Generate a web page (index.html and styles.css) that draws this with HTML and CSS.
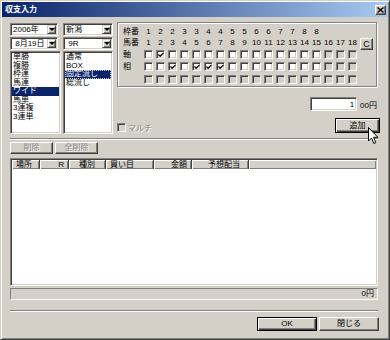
FILE: index.html
```html
<!DOCTYPE html>
<html lang="ja">
<head>
    <meta charset="UTF-8">
    <title>収支入力</title>
    <link rel="stylesheet" href="styles.css">
</head>
<body>
<div class="window">
    <div class="titlebar">
        <span class="title">収支入力</span>
        <span class="close"><svg width="7" height="6" viewBox="0 0 7 6"><path d="M0.5 0.5 L6.5 5.5 M6.5 0.5 L0.5 5.5" stroke="#000" stroke-width="1.4"/></svg></span>
    </div>
    <div class="content">
        <div class="top">
            <div class="left">
                <div class="combo-row">
                    <div class="combo c1"><span class="val">2006年</span><span class="drop"></span></div>
                    <div class="combo c2"><span class="val">新潟</span><span class="drop"></span></div>
                </div>
                <div class="combo-row">
                    <div class="combo c1"><span class="val">&nbsp;8月19日</span><span class="drop"></span></div>
                    <div class="combo c2"><span class="val">&nbsp;9R</span><span class="drop"></span></div>
                </div>
                <div class="list-row">
                    <ul class="listbox l1">
                        <li>単勝</li>
                        <li>複勝</li>
                        <li>枠連</li>
                        <li>馬連</li>
                        <li class="sel">ワイド</li>
                        <li>馬単</li>
                        <li>3連複</li>
                        <li>3連単</li>
                    </ul>
                    <ul class="listbox l2">
                        <li>通常</li>
                        <li>BOX</li>
                        <li class="sel focus">固定流し</li>
                        <li>総流し</li>
                    </ul>
                </div>
            </div>
            <div class="right">
                <div class="group">
                    <span class="lbl">枠番</span>
                    <span class="num">1</span><span class="num">2</span><span class="num">2</span><span class="num">3</span><span class="num">3</span><span class="num">4</span><span class="num">4</span><span class="num">5</span><span class="num">5</span><span class="num">6</span><span class="num">6</span><span class="num">7</span><span class="num">7</span><span class="num">8</span><span class="num">8</span><span class="num"></span><span class="num"></span><span class="num"></span>

                    <button class="btn clear">C</button>

                    <span class="lbl">馬番</span>
                    <span class="num">1</span><span class="num">2</span><span class="num">3</span><span class="num">4</span><span class="num">5</span><span class="num">6</span><span class="num">7</span><span class="num">8</span><span class="num">9</span><span class="num">10</span><span class="num">11</span><span class="num">12</span><span class="num">13</span><span class="num">14</span><span class="num">15</span><span class="num">16</span><span class="num">17</span><span class="num">18</span>

                    <span class="lbl">軸</span>
                    <i class="cb"></i><i class="cb on"><svg viewBox="0 0 7 7"><path d="M0.5 3 L2.5 5 L6.5 1" fill="none" stroke="#000" stroke-width="1.5"/></svg></i><i class="cb"></i><i class="cb"></i><i class="cb"></i><i class="cb"></i><i class="cb"></i><i class="cb"></i><i class="cb"></i><i class="cb"></i><i class="cb"></i><i class="cb"></i><i class="cb"></i><i class="cb"></i><i class="cb"></i><i class="cb off"></i><i class="cb off"></i><i class="cb off"></i>

                    <span class="lbl">相</span>
                    <i class="cb"></i><i class="cb"></i><i class="cb on"><svg viewBox="0 0 7 7"><path d="M0.5 3 L2.5 5 L6.5 1" fill="none" stroke="#000" stroke-width="1.5"/></svg></i><i class="cb"></i><i class="cb on"><svg viewBox="0 0 7 7"><path d="M0.5 3 L2.5 5 L6.5 1" fill="none" stroke="#000" stroke-width="1.5"/></svg></i><i class="cb on"><svg viewBox="0 0 7 7"><path d="M0.5 3 L2.5 5 L6.5 1" fill="none" stroke="#000" stroke-width="1.5"/></svg></i><i class="cb on"><svg viewBox="0 0 7 7"><path d="M0.5 3 L2.5 5 L6.5 1" fill="none" stroke="#000" stroke-width="1.5"/></svg></i><i class="cb"></i><i class="cb"></i><i class="cb"></i><i class="cb"></i><i class="cb"></i><i class="cb"></i><i class="cb"></i><i class="cb"></i><i class="cb off"></i><i class="cb off"></i><i class="cb off"></i>

                    <span class="lbl"></span>
                    <i class="cb off"></i><i class="cb off"></i><i class="cb off"></i><i class="cb off"></i><i class="cb off"></i><i class="cb off"></i><i class="cb off"></i><i class="cb off"></i><i class="cb off"></i><i class="cb off"></i><i class="cb off"></i><i class="cb off"></i><i class="cb off"></i><i class="cb off"></i><i class="cb off"></i><i class="cb off"></i><i class="cb off"></i><i class="cb off"></i>
                </div>
                <div class="amount-row">
                    <input class="amount" type="text" value="1" readonly>
                    <span>00円</span>
                </div>
                <div class="action-row">
                    <label class="multi"><i class="cb off"></i><span>マルチ</span></label>
                    <button class="btn default add">追加</button>
                </div>
            </div>
        </div>

        <div class="sep"></div>

        <div class="edit-row">
            <button class="btn small" disabled>削除</button>
            <button class="btn small" disabled>全削除</button>
        </div>

        <div class="listview">
            <div class="lv-head">
                <div class="col">場所</div>
                <div class="col right">R</div>
                <div class="col center">種別</div>
                <div class="col">買い目</div>
                <div class="col right">金額</div>
                <div class="col right pay">予想配当</div>
                <div class="col fill"></div>
            </div>
        </div>

        <div class="total">0円</div>

        <div class="sep sep-low"></div>

        <div class="footer">
            <button class="btn default wide">OK</button>
            <button class="btn wide">閉じる</button>
        </div>
    </div>

    <svg class="cursor" width="11" height="18" viewBox="0 0 11 18">
        <path d="M0.5 0.5 L0.5 14 L3.5 11 L5.8 16.5 L7.8 15.6 L5.6 10.3 L9.8 10.3 Z" fill="#fff" stroke="#000" stroke-width="1"/>
    </svg>
</div>
</body>
</html>
```

FILE: styles.css
```css
html, body {
    margin: 0;
    padding: 0;
}
body {
    width: 390px;
    height: 340px;
    background-color: #d4d0c8;
    font-family: "Liberation Sans", "Noto Sans CJK JP", sans-serif;
    font-size: 8px;
    color: #000;
}
.window {
    position: relative;
    box-sizing: border-box;
    width: 390px;
    height: 340px;
    padding: 1px;
    background-color: #d4d0c8;
    border: 1px solid;
    border-color: #d4d0c8 #404040 #404040 #d4d0c8;
    box-shadow: inset 1px 1px #fff, inset -1px -1px #808080;
}
.titlebar {
    display: flex;
    align-items: center;
    justify-content: space-between;
    height: 15px;
    padding: 0 2px 0 3px;
    background: linear-gradient(to right, #0a246a, #a6caf0);
}
.title {
    color: #fff;
    font-weight: bold;
    line-height: 15px;
}
.close {
    box-sizing: border-box;
    display: flex;
    align-items: center;
    justify-content: center;
    width: 11px;
    height: 10px;
    background-color: #d4d0c8;
    border: 1px solid;
    border-color: #fff #404040 #404040 #fff;
    box-shadow: inset -1px -1px #808080;
}
.content {
    padding: 5px 10px 0 8px;
}

/* top area */
.top {
    display: flex;
    gap: 4px;
}
.left {
    width: 103px;
    margin-top: 1px;
}
.right {
    flex: 1;
}
.combo-row {
    display: flex;
    gap: 5px;
    margin-bottom: 1px;
}
.combo {
    box-sizing: border-box;
    display: flex;
    align-items: center;
    height: 13px;
    padding: 1px;
    background-color: #fff;
    border: 1px solid;
    border-color: #808080 #fff #fff #808080;
    box-shadow: inset 1px 1px #404040, inset -1px -1px #d4d0c8;
}
.combo.c1 {
    width: 48px;
}
.combo.c2 {
    width: 50px;
}
.combo .val {
    flex: 1;
    padding-left: 1px;
    line-height: 9px;
    white-space: nowrap;
    overflow: hidden;
}
.drop {
    box-sizing: border-box;
    display: flex;
    align-items: center;
    justify-content: center;
    width: 9px;
    height: 9px;
    background-color: #d4d0c8;
    border: 1px solid;
    border-color: #d4d0c8 #404040 #404040 #d4d0c8;
    box-shadow: inset 1px 1px #fff, inset -1px -1px #808080;
}
.drop::after {
    content: "";
    border-left: 3px solid transparent;
    border-right: 3px solid transparent;
    border-top: 3px solid #000;
}
.list-row {
    display: flex;
    gap: 2px;
}
.listbox {
    box-sizing: border-box;
    height: 83px;
    margin: 0;
    padding: 1px;
    list-style: none;
    overflow: hidden;
    background-color: #fff;
    border: 1px solid;
    border-color: #808080 #fff #fff #808080;
    box-shadow: inset 1px 1px #404040, inset -1px -1px #d4d0c8;
}
.listbox.l1 {
    width: 51px;
}
.listbox.l2 {
    width: 50px;
}
.listbox li {
    height: 8.5px;
    line-height: 8.5px;
    padding-left: 1px;
    white-space: nowrap;
}
.listbox li.sel {
    background-color: #0a246a;
    color: #fff;
}
.listbox li.focus {
    outline: 1px dotted #d4d0c8;
    outline-offset: -1px;
}

/* horse grid */
.group {
    box-sizing: border-box;
    display: grid;
    grid-template-columns: 18px repeat(18, 9px) 13px;
    grid-template-rows: 11px 11px 12px 13px 12px;
    column-gap: 3px;
    height: 65px;
    margin-right: 1px;
    padding: 3px 0 1px 5px;
    border: 1px solid #808080;
    box-shadow: 1px 1px 0 #fff, inset 1px 1px 0 #fff;
}
.lbl {
    grid-column: 1;
    align-self: center;
    line-height: 9px;
    white-space: nowrap;
}
.num {
    align-self: center;
    text-align: center;
    line-height: 9px;
    white-space: nowrap;
    margin: 0 -3px;
}
.cb {
    box-sizing: border-box;
    display: block;
    align-self: center;
    width: 9px;
    height: 9px;
    background-color: #fff;
    border: 1px solid;
    border-color: #808080 #fff #fff #808080;
    box-shadow: inset 1px 1px #404040, inset -1px -1px #d4d0c8;
}
.cb.off {
    background-color: #d4d0c8;
}
.cb svg {
    display: block;
    width: 6px;
    height: 6px;
    margin: 1px 0 0 1px;
}
.btn {
    box-sizing: border-box;
    padding: 0;
    background-color: #d4d0c8;
    border: 1px solid;
    border-color: #fff #404040 #404040 #fff;
    box-shadow: inset -1px -1px #808080;
    font-family: "Liberation Sans", "Noto Sans CJK JP", sans-serif;
    font-size: 8px;
    line-height: 1;
    color: #000;
}
.btn.default {
    border-color: #000;
    box-shadow: inset 1px 1px #fff, inset -1px -1px #404040, inset -2px -2px #808080;
}
.btn:disabled {
    color: #808080;
    text-shadow: 1px 1px #fff;
}
.clear {
    grid-column: 20;
    grid-row: 2 / span 2;
    align-self: start;
    width: 13px;
    height: 12px;
    margin-top: 1px;
    font-size: 9px;
}
.amount-row {
    display: flex;
    align-items: center;
    justify-content: flex-end;
    gap: 3px;
    height: 14px;
    margin-top: 10px;
    padding-right: 1px;
}
.amount {
    box-sizing: border-box;
    width: 47px;
    height: 14px;
    padding: 0 2px;
    text-align: right;
    font-family: "Liberation Sans", sans-serif;
    font-size: 8px;
    background-color: #fff;
    border: 1px solid;
    border-color: #808080 #fff #fff #808080;
    box-shadow: inset 1px 1px #404040, inset -1px -1px #d4d0c8;
    outline: none;
}
.action-row {
    display: flex;
    align-items: center;
    justify-content: space-between;
    height: 15px;
    margin-top: 7px;
}
.multi {
    display: flex;
    align-items: center;
    gap: 2px;
    margin-top: 4px;
    color: #808080;
    text-shadow: 1px 1px #fff;
}
.add {
    width: 45px;
    height: 15px;
    margin-right: -2px;
}

/* lower area */
.sep {
    height: 0;
    margin-top: 4px;
    border-top: 1px solid #808080;
    border-bottom: 1px solid #fff;
}
.sep-low {
    margin-top: 10px;
}
.edit-row {
    display: flex;
    gap: 2px;
    margin-top: 2px;
}
.small {
    width: 43px;
    height: 12px;
}
.listview {
    box-sizing: border-box;
    height: 128px;
    margin-top: 4px;
    padding: 1px;
    background-color: #fff;
    border: 1px solid;
    border-color: #808080 #fff #fff #808080;
    box-shadow: inset 1px 1px #404040, inset -1px -1px #d4d0c8;
}
.lv-head {
    display: grid;
    grid-template-columns: 28px 29px 37px 48px 38px 57px 1fr;
    height: 9px;
}
.col {
    box-sizing: border-box;
    min-width: 0;
    height: 9px;
    padding: 0 4px;
    overflow: hidden;
    line-height: 9px;
    white-space: nowrap;
    background-color: #d4d0c8;
    border-right: 1px solid #404040;
    box-shadow: inset 1px 1px #fff, inset -1px -1px #808080;
}
.col.right {
    text-align: right;
}
.col.center {
    text-align: center;
}
.col.pay {
    padding-right: 8px;
}
.col.fill {
    border-right: none;
}
.total {
    box-sizing: border-box;
    height: 12px;
    margin-top: 2px;
    padding-right: 3px;
    line-height: 10px;
    text-align: right;
    border: 1px solid;
    border-color: #808080 #fff #fff #808080;
}
.footer {
    display: flex;
    justify-content: flex-end;
    gap: 2px;
    margin-top: 5px;
    margin-right: -1px;
}
.wide {
    width: 60px;
    height: 14px;
}
.cursor {
    position: absolute;
    left: 367px;
    top: 126px;
}
```
